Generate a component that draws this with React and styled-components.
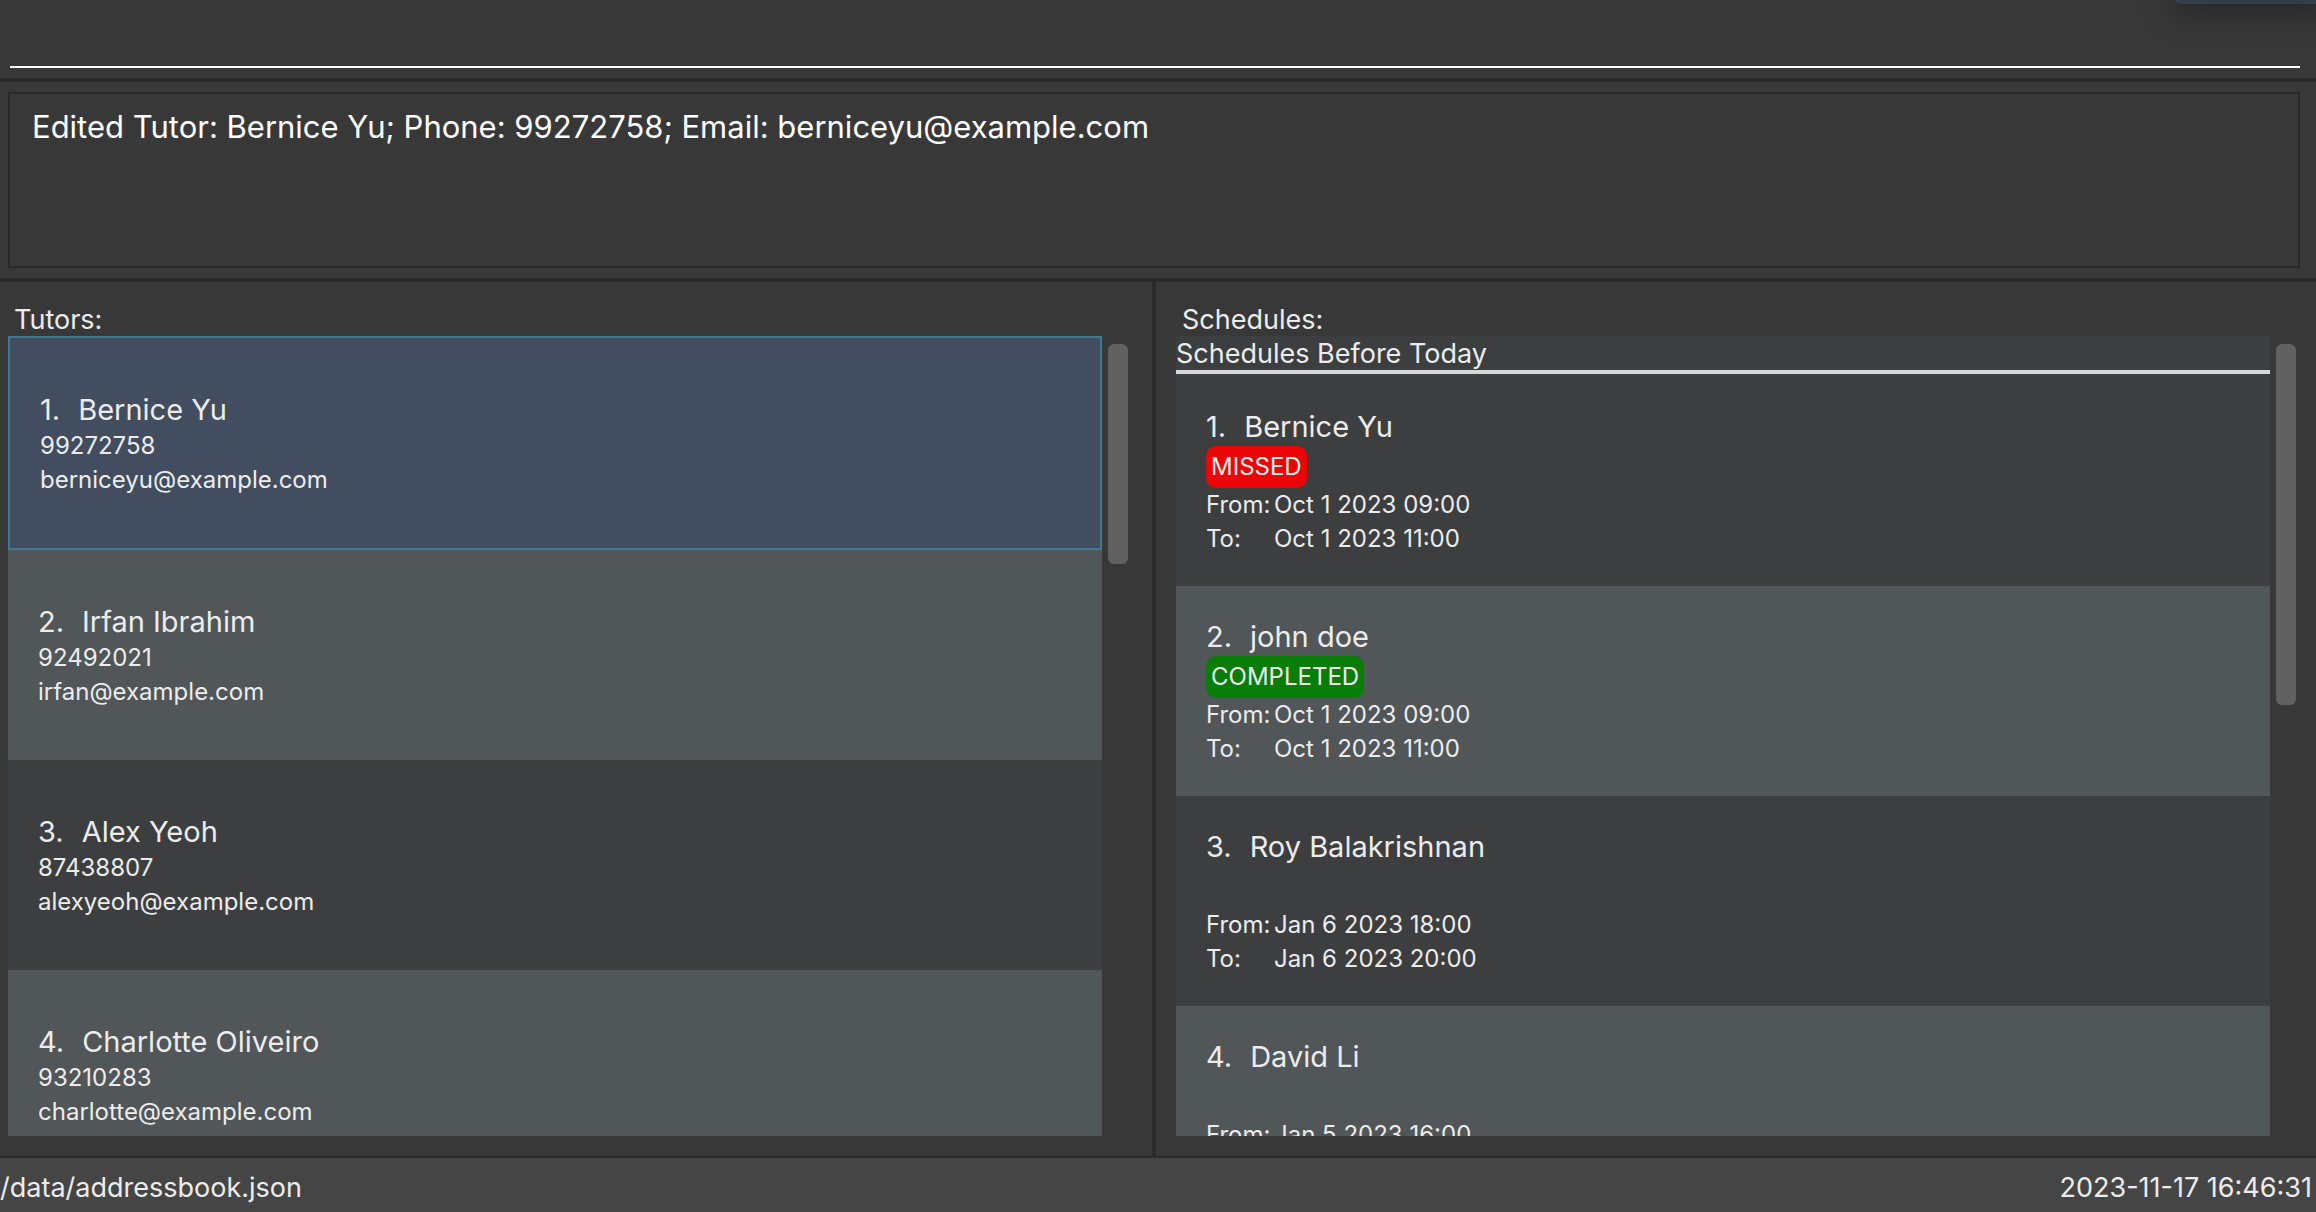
import React from "react";
import styled, { createGlobalStyle, css } from "styled-components";

const color = {
  base: "#383838",
  line: "#2a2a2a",
  row: "#3c3e3f",
  rowAlt: "#515658",
  selected: "#424d5f",
  selectedBorder: "#3e7b91",
  thumb: "#616161",
  footer: "#454545",
  text: "#ececec",
};

const GlobalStyle = createGlobalStyle`
  * { box-sizing: border-box; }
  body {
    margin: 0;
    background: ${color.base};
    color: ${color.text};
    font-family: Inter, "Liberation Sans", sans-serif;
  }
`;

const Window = styled.div`
  display: flex;
  flex-direction: column;
  height: 100vh;
  overflow: hidden;
`;

const CommandBar = styled.form`
  flex: none;
  display: flex;
  padding: 8px 16px 10px 10px;
  border-bottom: 4px solid ${color.line};
`;

const CommandInput = styled.input`
  flex: 1;
  min-width: 0;
  height: 60px;
  padding: 0;
  border: 0;
  border-bottom: 2px solid #ffffff;
  outline: 0;
  background: transparent;
  color: #ffffff;
  font: inherit;
  font-size: 31px;
`;

const ResultPane = styled.section`
  flex: none;
  display: flex;
  padding: 10px 16px 10px 8px;
  border-bottom: 4px solid ${color.line};
`;

const ResultText = styled.textarea`
  flex: 1;
  height: 176px;
  padding: 14px 22px;
  border: 2px solid ${color.line};
  outline: 0;
  resize: none;
  background: transparent;
  color: #ffffff;
  font: inherit;
  font-size: 31px;
  line-height: 38px;
`;

const Split = styled.main`
  flex: 1;
  min-height: 0;
  display: grid;
  grid-template-columns: minmax(0, 1152fr) 4px minmax(0, 1160fr);
`;

const Divider = styled.div`
  background: ${color.line};
`;

const Panel = styled.section`
  display: flex;
  flex-direction: column;
  min-height: 0;
  padding: 20px ${(p) => p.$right}px 20px ${(p) => p.$left}px;
`;

const PanelTitle = styled.h2`
  margin: 0;
  padding: 2px 0 0 6px;
  font-size: 27px;
  font-weight: 400;
  line-height: 32px;
`;

const ListArea = styled.div`
  flex: 1;
  min-height: 0;
  display: flex;
  gap: 6px;
`;

const ListView = styled.div`
  flex: 1;
  min-width: 0;
  overflow-y: auto;
  scrollbar-width: none;
  background: ${color.row};
`;

const ScrollTrack = styled.div`
  flex: none;
  width: 20px;
  padding: 8px 0;
`;

const ScrollThumb = styled.div`
  height: ${(p) => p.$share}%;
  border-radius: 6px;
  background: ${color.thumb};
`;

const GroupHeading = styled.h3`
  margin: 0 0 2px;
  padding-top: 2px;
  border-bottom: 4px solid #d5d8d6;
  font-size: 27px;
  font-weight: 400;
  line-height: 32px;
`;

const Rows = styled.ul`
  margin: 0;
  padding: 0;
  list-style: none;
`;

const Row = styled.li`
  display: flex;
  flex-direction: column;
  justify-content: center;
  align-items: flex-start;
  height: 210px;
  padding: 2px 30px 0;
  background: ${color.row};
  &:nth-child(even) {
    background: ${color.rowAlt};
  }
  ${(p) =>
    p.$selected &&
    css`
      height: 214px;
      border: 2px solid ${color.selectedBorder};
      background: ${color.selected};
    `}
`;

const Name = styled.div`
  display: flex;
  gap: 18px;
  font-size: 29px;
  line-height: 38px;
`;

const Line = styled.div`
  font-size: 24px;
  line-height: 34px;
`;

const StatusSlot = styled.div`
  height: 42px;
`;

const Badge = styled.span`
  display: block;
  padding: 0 5px;
  border-radius: 10px;
  background: ${(p) => (p.$status === "MISSED" ? "#ec0505" : "#087d08")};
  font-size: 24px;
  line-height: 42px;
`;

const Times = styled.dl`
  display: grid;
  grid-template-columns: 68px auto;
  grid-template-rows: 34px 34px;
  margin: 0;
  font-size: 24px;
  line-height: 34px;
  white-space: nowrap;
  dd {
    margin: 0;
  }
`;

const StatusBar = styled.footer`
  flex: none;
  display: flex;
  justify-content: space-between;
  padding: 12px 4px 6px 0;
  border-top: 2px solid ${color.line};
  background: ${color.footer};
  font-size: 27px;
  line-height: 36px;
`;

const CornerNotice = styled.div`
  position: fixed;
  top: -20px;
  right: -20px;
  width: 165px;
  height: 24px;
  border-radius: 14px;
  background: #323f4a;
  box-shadow: 0 8px 32px rgba(0, 0, 0, 0.4);
`;

const tutors = [
  { name: "Bernice Yu", phone: "99272758", email: "berniceyu@example.com" },
  { name: "Irfan Ibrahim", phone: "92492021", email: "irfan@example.com" },
  { name: "Alex Yeoh", phone: "87438807", email: "alexyeoh@example.com" },
  { name: "Charlotte Oliveiro", phone: "93210283", email: "charlotte@example.com" },
];

const schedules = [
  { name: "Bernice Yu", status: "MISSED", from: "Oct 1 2023 09:00", to: "Oct 1 2023 11:00" },
  { name: "john doe", status: "COMPLETED", from: "Oct 1 2023 09:00", to: "Oct 1 2023 11:00" },
  { name: "Roy Balakrishnan", from: "Jan 6 2023 18:00", to: "Jan 6 2023 20:00" },
  { name: "David Li", from: "Jan 5 2023 16:00" },
];

function ScrollList({ share, children }) {
  return (
    <ListArea>
      <ListView>{children}</ListView>
      <ScrollTrack>
        <ScrollThumb $share={share} />
      </ScrollTrack>
    </ListArea>
  );
}

export default function App() {
  return (
    <Window>
      <GlobalStyle />
      <CommandBar onSubmit={(e) => e.preventDefault()}>
        <CommandInput type="text" aria-label="Command" />
      </CommandBar>
      <ResultPane>
        <ResultText
          readOnly
          aria-label="Result"
          value="Edited Tutor: Bernice Yu; Phone: 99272758; Email: berniceyu@example.com"
        />
      </ResultPane>
      <Split>
        <Panel $left={8} $right={24}>
          <PanelTitle>Tutors:</PanelTitle>
          <ScrollList share={28}>
            <Rows>
              {tutors.map((t, i) => (
                <Row key={t.email} $selected={i === 0}>
                  <Name>
                    <span>{i + 1}.</span>
                    <span>{t.name}</span>
                  </Name>
                  <Line>{t.phone}</Line>
                  <Line>{t.email}</Line>
                </Row>
              ))}
            </Rows>
          </ScrollList>
        </Panel>
        <Divider />
        <Panel $left={20} $right={20}>
          <PanelTitle>Schedules:</PanelTitle>
          <ScrollList share={46}>
            <GroupHeading>Schedules Before Today</GroupHeading>
            <Rows>
              {schedules.map((s, i) => (
                <Row key={s.name}>
                  <Name>
                    <span>{i + 1}.</span>
                    <span>{s.name}</span>
                  </Name>
                  <StatusSlot>
                    {s.status && <Badge $status={s.status}>{s.status}</Badge>}
                  </StatusSlot>
                  <Times>
                    <dt>From:</dt>
                    <dd>{s.from}</dd>
                    {s.to && (
                      <>
                        <dt>To:</dt>
                        <dd>{s.to}</dd>
                      </>
                    )}
                  </Times>
                </Row>
              ))}
            </Rows>
          </ScrollList>
        </Panel>
      </Split>
      <StatusBar>
        <span>/data/addressbook.json</span>
        <time dateTime="2023-11-17T16:46:31">2023-11-17 16:46:31</time>
      </StatusBar>
      <CornerNotice />
    </Window>
  );
}
